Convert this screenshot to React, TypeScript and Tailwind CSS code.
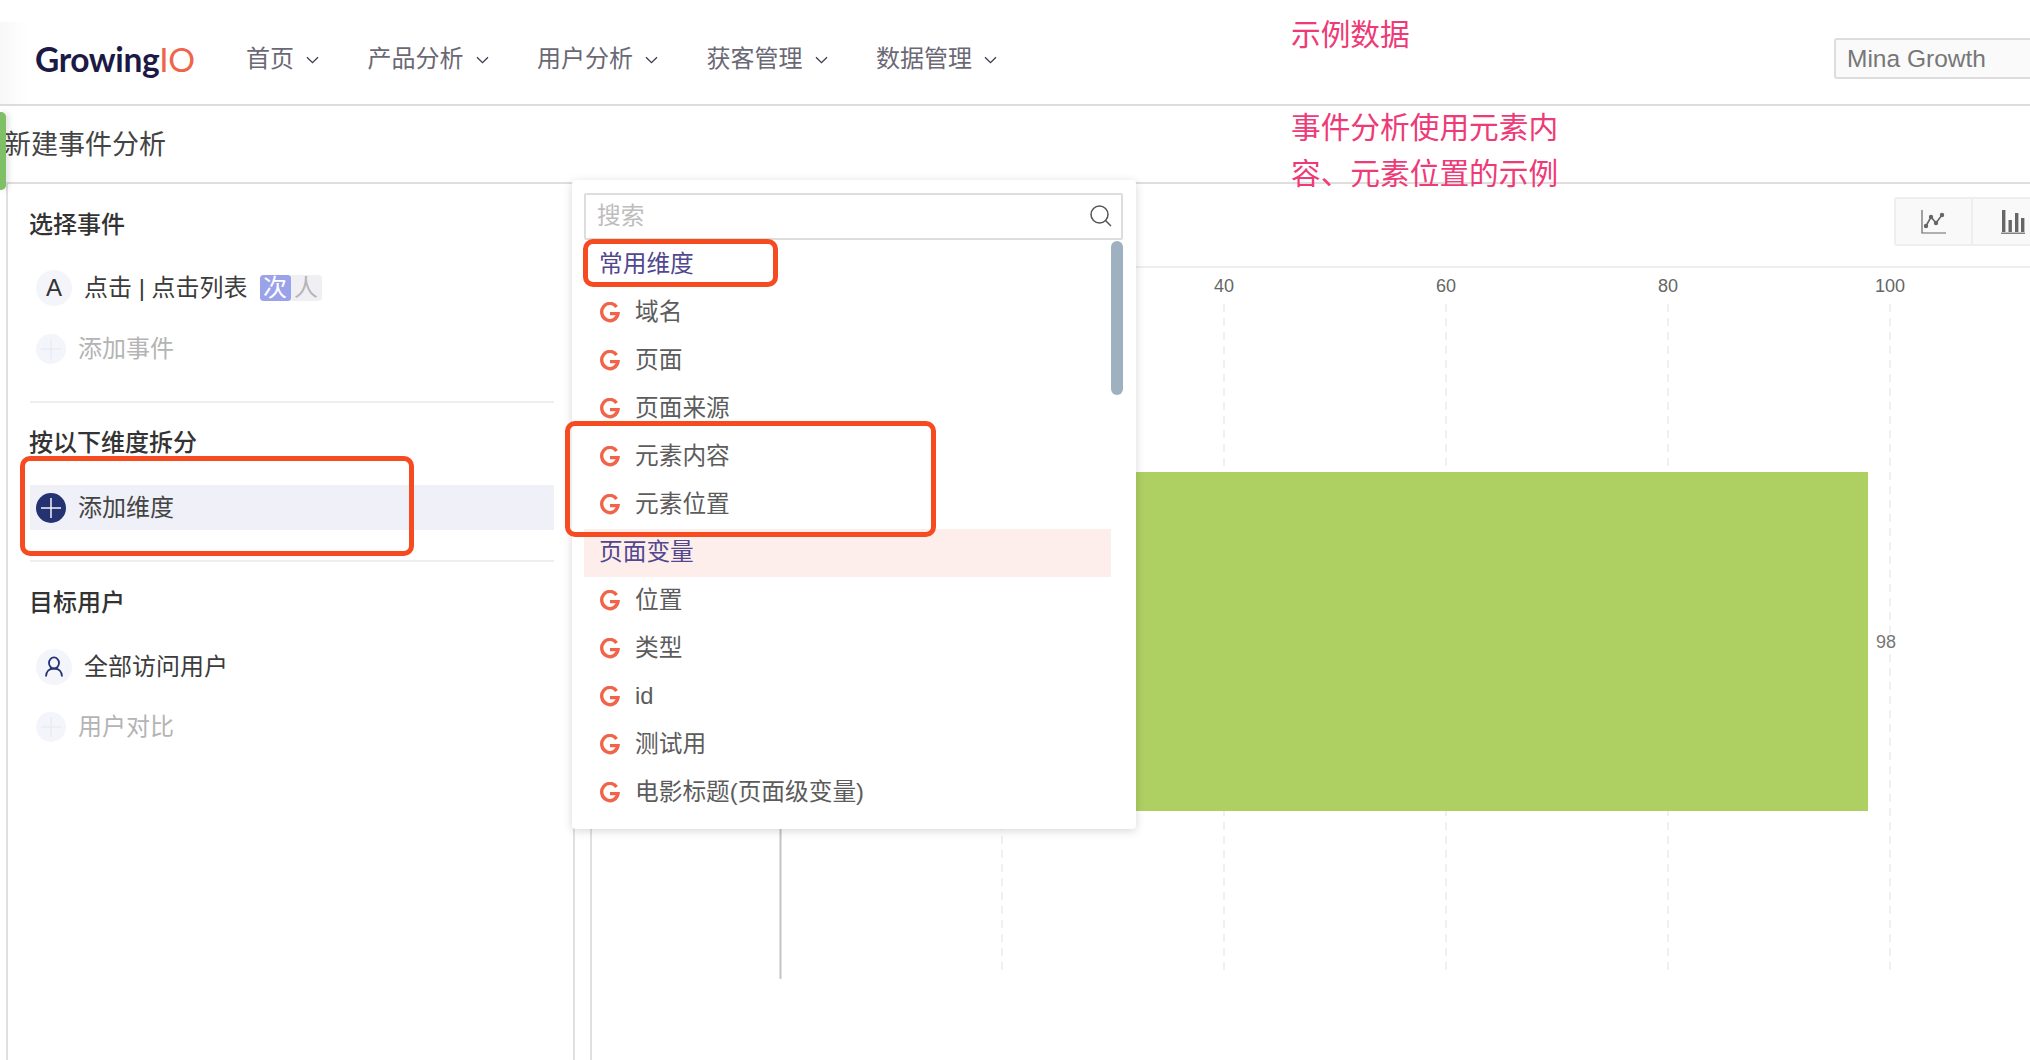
import React from "react";

const cjk = { fontFamily: '"Liberation Sans","Noto Sans CJK SC",sans-serif' };

function Chevron() {
  return (
    <svg width="13" height="8" viewBox="0 0 13 8" className="ml-[12px] mt-[2px]" fill="none" stroke="#3c3a4c" strokeWidth="1.3">
      <path d="M1 1.2 6.5 6.6 12 1.2" />
    </svg>
  );
}

function PlusCircle({ active }: { active?: boolean }) {
  return (
    <span className={`flex h-[30px] w-[30px] shrink-0 items-center justify-center rounded-full ${active ? "bg-[#253272]" : "bg-[#f4f5fb]"}`}>
      <svg width="20" height="20" viewBox="0 0 20 20" stroke={active ? "#f2f3fa" : "#e9ebf5"} strokeWidth="1.5">
        <path d="M10 0v20M0 10h20" />
      </svg>
    </span>
  );
}

function GIcon() {
  return (
    <svg width="20" height="22" viewBox="0 0 20 22" fill="none" stroke="#f0654a" strokeWidth="3.4" className="shrink-0">
      <path d="M16.6 5A8.2 8.6 0 1 0 18 11.6H10" />
    </svg>
  );
}

function Item({ label }: { label: string }) {
  return (
    <div className="flex h-[48px] items-center pl-[16px] text-[23.7px] text-[#5c5c5c]">
      <GIcon />
      <span className="ml-[15px]">{label}</span>
    </div>
  );
}

function Group({ label, hl }: { label: string; hl?: boolean }) {
  return (
    <div className={`flex h-[48px] items-center pl-[15px] text-[23.7px] text-[#51478f] ${hl ? "bg-[#fdeeeb]" : ""}`}>{label}</div>
  );
}

function NavItem({ label }: { label: string }) {
  return (
    <div className="flex items-center text-[24px] text-[#6b6875]">
      <span>{label}</span>
      <Chevron />
    </div>
  );
}

const grid = [1002, 1224, 1446, 1668, 1890];

export default function App() {
  return (
    <div className="relative flex h-[1060px] w-[2030px] flex-col overflow-hidden bg-white" style={cjk}>
      <header className="relative flex h-[106px] shrink-0 items-center border-b-2 border-[#dcdcdc] pt-[22px]">
        <div className="absolute bottom-0 left-0 top-[22px] w-[28px] bg-gradient-to-r from-[#f8f8f8] to-white" />
        <div className="relative -mt-[7px] w-[246px] shrink-0 pl-[35px] text-[33.5px] font-bold tracking-[-0.4px] text-[#1c1a45]" style={{ fontFamily: "Lato, sans-serif" }}>
          Growing<span className="font-normal text-[#f0654a]">IO</span>
        </div>
        <nav className="relative -mt-[9px] flex items-center gap-[48.5px]">
          {["首页", "产品分析", "用户分析", "获客管理", "数据管理"].map((n) => (
            <NavItem key={n} label={n} />
          ))}
        </nav>
        <div className="absolute left-[1834px] top-[38px] flex h-[41px] w-[220px] items-center rounded-[3px] border-2 border-[#dddddd] bg-[#fafafa] pl-[11px] pt-[1px] text-[24.5px] text-[#777]">
          Mina Growth
        </div>
      </header>

      <div className="flex h-[78px] shrink-0 items-center border-b-2 border-[#dedede] pl-[4px] pt-[2px] text-[27px] text-[#444]">
        新建事件分析
      </div>
      <div className="absolute left-0 top-[112px] h-[78px] w-[6px] rounded-r-[5px] bg-[#7fbf66] shadow-[2px_0_6px_rgba(0,0,0,0.15)]" />

      <div className="flex min-h-0 flex-1">
        <aside className="ml-[6px] w-[569px] shrink-0 border-x-2 border-[#e0e0e0] pl-[22px] pr-[19px]">
          <h3 className="-ml-[1px] mt-[24px] flex h-[34px] items-center text-[24px] font-medium text-[#333]">选择事件</h3>
          <div className="mt-[28px] flex items-center pl-[6px]">
            <span className="flex h-[36px] w-[36px] items-center justify-center rounded-full bg-[#f4f5fb] text-[24px] text-[#333]">A</span>
            <span className="ml-[12px] text-[24px] text-[#3c3c3c]">点击 | 点击列表</span>
            <span className="ml-[12px] flex h-[26px] overflow-hidden rounded-[3px] text-[24px] leading-[26px]">
              <span className="w-[31px] rounded-[3px] bg-[#9aa3ea] text-center text-white">次</span>
              <span className="w-[31px] bg-[#f0f0f4] text-center text-[#b5b5b5]">人</span>
            </span>
          </div>
          <div className="mt-[28px] flex h-[30px] items-center pl-[6px]">
            <PlusCircle />
            <span className="ml-[12px] text-[24px] text-[#b4b4b4]">添加事件</span>
          </div>
          <div className="mt-[37px] h-[2px] bg-[#eeeeee]" />

          <h3 className="-ml-[1px] mt-[23px] flex h-[34px] items-center text-[24px] font-medium text-[#333]">按以下维度拆分</h3>
          <div className="mt-[25px] flex h-[45px] items-center bg-[#eff0f8] pl-[6px]">
            <PlusCircle active />
            <span className="ml-[12px] text-[24px] text-[#444]">添加维度</span>
          </div>
          <div className="mt-[30px] h-[2px] bg-[#eeeeee]" />

          <h3 className="-ml-[1px] mt-[24px] flex h-[34px] items-center text-[24px] font-medium text-[#333]">目标用户</h3>
          <div className="mt-[29px] flex items-center pl-[6px]">
            <span className="flex h-[36px] w-[36px] items-center justify-center rounded-full bg-[#f4f5fb]">
              <svg width="20" height="22" viewBox="0 0 20 22" fill="none" stroke="#253272" strokeWidth="1.8">
                <ellipse cx="10" cy="7" rx="5" ry="5.6" />
                <path d="M2 20.5c0-5 3.2-8 8-8s8 3 8 8" />
              </svg>
            </span>
            <span className="ml-[12px] text-[24px] text-[#3c3c3c]">全部访问用户</span>
          </div>
          <div className="mt-[27px] flex h-[30px] items-center pl-[6px]">
            <PlusCircle />
            <span className="ml-[12px] text-[24px] text-[#b4b4b4]">用户对比</span>
          </div>
        </aside>

        <main className="ml-[15px] min-w-0 flex-1 border-l-2 border-[#e0e0e0]">
          <div className="flex h-[84px] items-start border-b-2 border-[#eeeeee] pl-[1302px] pt-[13px]">
            <div className="flex h-[49px] shrink-0 rounded-[3px] border-2 border-[#eeeeee] bg-[#f9f9f9]">
              <div className="flex w-[77px] items-center justify-center border-r-2 border-[#eeeeee]">
                <svg width="25" height="24" viewBox="0 0 25 24" fill="none" stroke="#666">
                  <path d="M1 0v23h24" strokeWidth="1.2" />
                  <path d="M5 16 10 7 15 13 21 5" strokeWidth="1.6" />
                  <g fill="#666" stroke="none">
                    <circle cx="5" cy="16" r="2.2" />
                    <circle cx="10" cy="7" r="2.2" />
                    <circle cx="15" cy="13" r="2.2" />
                    <circle cx="21" cy="5" r="2.2" />
                  </g>
                </svg>
              </div>
              <div className="flex w-[90px] items-center pl-[28px]">
                <svg width="25" height="24" viewBox="0 0 25 24" fill="#666" stroke="none">
                  <rect x="1" y="0" width="3.4" height="22" />
                  <rect x="7.5" y="10" width="3.4" height="12" />
                  <rect x="14" y="3" width="3.4" height="19" />
                  <rect x="20" y="8" width="3.4" height="14" />
                  <rect x="0" y="22.6" width="24" height="1.2" />
                </svg>
              </div>
            </div>
          </div>
          <svg width="1438" height="791" viewBox="592 269 1438 791" className="block" style={{ fontFamily: '"Liberation Sans",sans-serif' }}>
            {grid.map((x) => (
              <line key={x} x1={x} x2={x} y1="305" y2="976" stroke="#ececec" strokeWidth="1.5" strokeDasharray="8 6" />
            ))}
            {[["40", 1224], ["60", 1446], ["80", 1668], ["100", 1890]].map(([t, x]) => (
              <text key={t} x={x} y="293" textAnchor="middle" fontSize="18" fill="#666">{t}</text>
            ))}
            <line x1="780.5" x2="780.5" y1="305" y2="980" stroke="#c4c4c4" strokeWidth="2" />
            <rect x="780" y="473" width="1088" height="339" fill="#aecf62" />
            <text x="1876" y="649" fontSize="18" fill="#777">98</text>
          </svg>
        </main>
      </div>

      {/* dropdown */}
      <div className="absolute left-[572px] top-[180px] h-[649px] w-[564px] rounded-[4px] bg-white pl-[12px] pr-[13px] pt-[13px] shadow-[0_2px_10px_rgba(0,0,0,0.16)]">
        <div className="flex h-[47px] items-center justify-between rounded-[2px] border-2 border-[#dddddd] pl-[11px] pr-[9px] text-[23.7px] text-[#bdbdbd]">
          <span>搜索</span>
          <svg width="23" height="23" viewBox="0 0 23 23" fill="none" stroke="#555" strokeWidth="1.5" className="-mt-[2px]">
            <circle cx="10.5" cy="10.5" r="8.5" />
            <path d="M16.5 16.5 22 22" />
          </svg>
        </div>
        <div className="relative mt-[1px] pr-[12px]">
          <Group label="常用维度" />
          {["域名", "页面", "页面来源", "元素内容", "元素位置"].map((l) => (
            <Item key={l} label={l} />
          ))}
          <Group label="页面变量" hl />
          {["位置", "类型", "id", "测试用", "电影标题(页面级变量)"].map((l) => (
            <Item key={l} label={l} />
          ))}
          <div className="absolute right-0 top-0 h-[154px] w-[12px] rounded-[6px] bg-[#9fb1c0]" />
        </div>
      </div>

      {/* annotations */}
      <div className="absolute left-[20px] top-[456px] h-[100px] w-[394px] rounded-[10px] border-[5px] border-[#f64a21]" />
      <div className="absolute left-[583px] top-[239px] h-[48px] w-[195px] rounded-[10px] border-[5px] border-[#f64a21]" />
      <div className="absolute left-[565px] top-[421px] h-[116px] w-[371px] rounded-[10px] border-[5px] border-[#f64a21]" />

      <div className="absolute left-[1291px] top-[14px] text-[29.7px] leading-[42px] text-[#ee3a76]">示例数据</div>
      <div className="absolute left-[1291px] top-[105px] w-[270px] text-[29.7px] leading-[46px] text-[#ee3a76]">事件分析使用元素内容、元素位置的示例</div>
    </div>
  );
}
